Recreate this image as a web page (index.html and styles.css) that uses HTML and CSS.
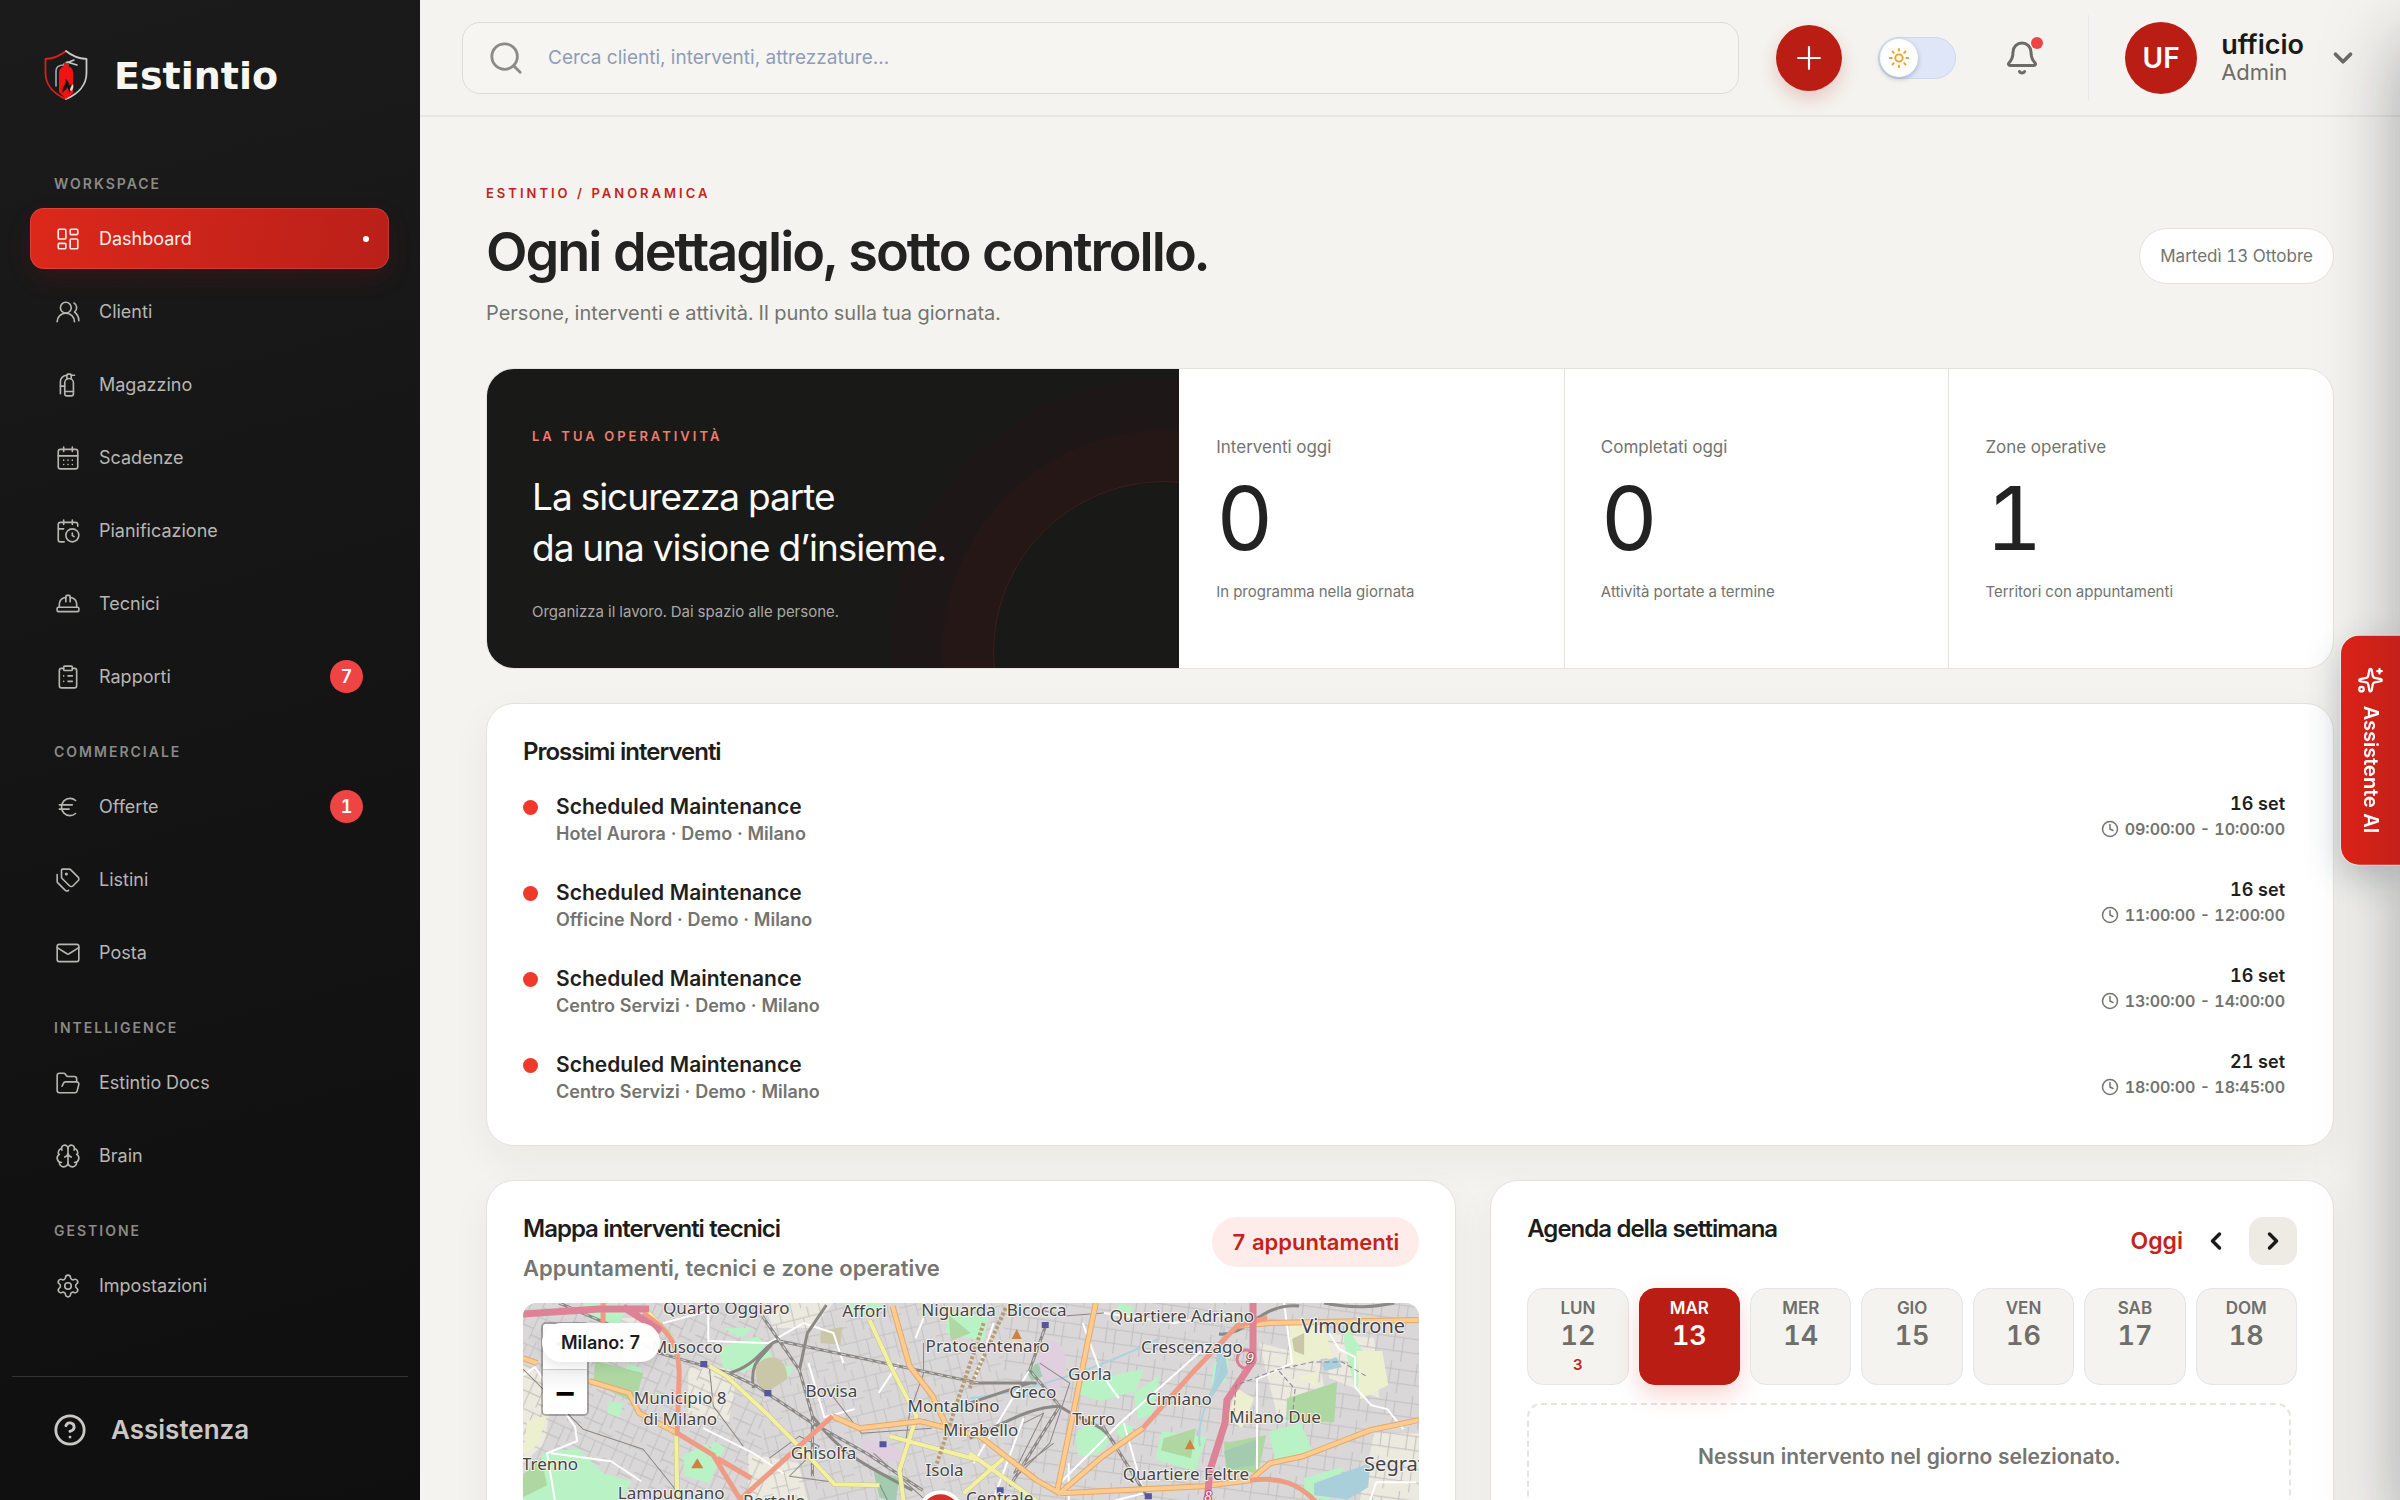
FILE: index.html
```html
<!DOCTYPE html>
<html lang="it">
<head>
<meta charset="utf-8">
<meta name="viewport" content="width=device-width, initial-scale=1">
<title>Estintio – Dashboard</title>
<link rel="stylesheet" href="styles.css">
</head>
<body>
<div class="app">
  <aside class="sidebar">
    <a class="brand" href="#">
      <svg class="brand-mark" viewBox="0 0 44 50" fill="none" aria-hidden="true">
        <path d="M22 1C16 6 9 8.500 1.500 9v14C1.500 35 10 44 22 49" stroke="#d81f1f" stroke-width="1.800"/>
        <path d="M22 1c6 5 13 7.500 20.500 8v14C42.500 35 34 44 22 49" stroke="#c9c9c9" stroke-width="1.800"/>
        <path d="M12 36V21c0-4 3-6 8-6h4" stroke="#a8a8a8" stroke-width="1.600"/>
        <path d="M20 14l10-4M23 12l10 3" stroke="#c9c9c9" stroke-width="1.500"/>
        <path d="M15 42V23c0-4 3-6 5-7v-3h4v3c3 1 5 3 5 7v20l-7 6z" fill="#f31212"/>
        <path d="M19 43c-2-4 1-6 2-9 1-2 1-3 0-5 4 2 4 4 4 7 1-1 1-2 1-3 2 4 1 7-1 10 0-3-1-4-2-6 0 3-3 3-4 6z" fill="#1c1010"/>
        <path d="M26 40c0-3 2-4 3-6 1 3 0 6-2 7z" fill="#ddd"/>
      </svg>
      <span class="brand-name">Estintio</span>
    </a>
    <nav class="nav" aria-label="Menu principale">
      <h2 class="nav-label">WORKSPACE</h2>
      <ul class="nav-list">
        <li><a class="nav-item active" href="#" aria-current="page"><svg class="icon" viewBox="0 0 24 24"><rect x="3" y="3" width="7" height="9" rx="1"/><rect x="14" y="3" width="7" height="5" rx="1"/><rect x="14" y="12" width="7" height="9" rx="1"/><rect x="3" y="16" width="7" height="5" rx="1"/></svg><span>Dashboard</span><i class="active-dot"></i></a></li>
        <li><a class="nav-item" href="#"><svg class="icon" viewBox="0 0 24 24"><path d="M18 21a8 8 0 0 0-16 0"/><circle cx="10" cy="8" r="5"/><path d="M22 20c0-3.370-2-6.500-4-8a5 5 0 0 0-.45-8.300"/></svg><span>Clienti</span></a></li>
        <li><a class="nav-item" href="#"><svg class="icon" viewBox="0 0 24 24"><path d="M15 6.500V3a1 1 0 0 0-1-1h-2a1 1 0 0 0-1 1v3.500"/><path d="M9 18h8"/><path d="M18 3h-3"/><path d="M11 3a6 6 0 0 0-6 6v11"/><path d="M5 13h4"/><path d="M17 10a4 4 0 0 0-8 0v10a2 2 0 0 0 2 2h4a2 2 0 0 0 2-2Z"/></svg><span>Magazzino</span></a></li>
        <li><a class="nav-item" href="#"><svg class="icon" viewBox="0 0 24 24"><path d="M8 2v4M16 2v4M3 10h18"/><rect width="18" height="18" x="3" y="4" rx="2"/><path d="M8 14h.01M12 14h.01M16 14h.01M8 18h.01M12 18h.01M16 18h.01"/></svg><span>Scadenze</span></a></li>
        <li><a class="nav-item" href="#"><svg class="icon" viewBox="0 0 24 24"><path d="M16 14v2.200l1.600 1M16 2v4"/><path d="M21 7.500V6a2 2 0 0 0-2-2H5a2 2 0 0 0-2 2v14a2 2 0 0 0 2 2h3.500M3 10h5M8 2v4"/><circle cx="16" cy="16" r="6"/></svg><span>Pianificazione</span></a></li>
        <li><a class="nav-item" href="#"><svg class="icon" viewBox="0 0 24 24"><path d="M10 10V5a1 1 0 0 1 1-1h2a1 1 0 0 1 1 1v5"/><path d="M14 6a6 6 0 0 1 6 6v3"/><path d="M4 15v-3a6 6 0 0 1 6-6"/><rect x="2" y="15" width="20" height="4" rx="1"/></svg><span>Tecnici</span></a></li>
        <li><a class="nav-item" href="#"><svg class="icon" viewBox="0 0 24 24"><rect width="8" height="4" x="8" y="2" rx="1"/><path d="M16 4h2a2 2 0 0 1 2 2v14a2 2 0 0 1-2 2H6a2 2 0 0 1-2-2V6a2 2 0 0 1 2-2h2M12 11h4M12 16h4M8 11h.01M8 16h.01"/></svg><span>Rapporti</span><b class="count">7</b></a></li>
      </ul>
      <h2 class="nav-label">COMMERCIALE</h2>
      <ul class="nav-list">
        <li><a class="nav-item" href="#"><svg class="icon" viewBox="0 0 24 24"><path d="M4 10h12M4 14h9"/><path d="M19 6a7.700 7.700 0 0 0-5.200-2A7.900 7.900 0 0 0 6 12c0 4.400 3.500 8 7.800 8 2 0 3.800-.8 5.200-2"/></svg><span>Offerte</span><b class="count">1</b></a></li>
        <li><a class="nav-item" href="#"><svg class="icon" viewBox="0 0 24 24"><path d="M13.172 2a2 2 0 0 1 1.414.586l6.710 6.710a2.400 2.400 0 0 1 0 3.408l-4.592 4.592a2.400 2.400 0 0 1-3.408 0l-6.710-6.710A2 2 0 0 1 6 9.172V3a1 1 0 0 1 1-1z"/><path d="M2 7v6.172a2 2 0 0 0 .586 1.414l6.710 6.710a2.400 2.400 0 0 0 3.191.193"/><circle cx="10.500" cy="6.500" r=".7"/></svg><span>Listini</span></a></li>
        <li><a class="nav-item" href="#"><svg class="icon" viewBox="0 0 24 24"><path d="m22 7-8.991 5.727a2 2 0 0 1-2.009 0L2 7"/><rect x="2" y="4" width="20" height="16" rx="2"/></svg><span>Posta</span></a></li>
      </ul>
      <h2 class="nav-label">INTELLIGENCE</h2>
      <ul class="nav-list">
        <li><a class="nav-item" href="#"><svg class="icon" viewBox="0 0 24 24"><path d="M2 7.500V5c0-1.100.9-2 2-2h3.900a2 2 0 0 1 1.690.9l.81 1.200a2 2 0 0 0 1.670.9H18a2 2 0 0 1 2 2v2M6.500 15l1.400-2.900A2 2 0 0 1 9.700 11H20a2 2 0 0 1 1.940 2.500l-1.550 6a2 2 0 0 1-1.940 1.500H4a2 2 0 0 1-2-2V7"/></svg><span>Estintio Docs</span></a></li>
        <li><a class="nav-item" href="#"><svg class="icon" viewBox="0 0 24 24"><path d="M12 18V5M15 13a4.170 4.170 0 0 1-3-4 4.170 4.170 0 0 1-3 4"/><path d="M17.598 6.500A3 3 0 1 0 12 5a3 3 0 1 0-5.598 1.500"/><path d="M17.997 5.125a4 4 0 0 1 2.526 5.770M18 18a4 4 0 0 0 2-7.464"/><path d="M19.967 17.483A4 4 0 1 1 12 18a4 4 0 1 1-7.967-.517"/><path d="M6 18a4 4 0 0 1-2-7.464M6.003 5.125a4 4 0 0 0-2.526 5.770"/></svg><span>Brain</span></a></li>
      </ul>
      <h2 class="nav-label">GESTIONE</h2>
      <ul class="nav-list">
        <li><a class="nav-item" href="#"><svg class="icon" viewBox="0 0 24 24"><path d="M9.671 4.136a2.340 2.340 0 0 1 4.659 0 2.340 2.340 0 0 0 3.319 1.915 2.340 2.340 0 0 1 2.330 4.033 2.340 2.340 0 0 0 0 3.831 2.340 2.340 0 0 1-2.330 4.033 2.340 2.340 0 0 0-3.319 1.915 2.340 2.340 0 0 1-4.659 0 2.340 2.340 0 0 0-3.320-1.915 2.340 2.340 0 0 1-2.330-4.033 2.340 2.340 0 0 0 0-3.831A2.340 2.340 0 0 1 6.350 6.051a2.340 2.340 0 0 0 3.319-1.915"/><circle cx="12" cy="12" r="3"/></svg><span>Impostazioni</span></a></li>
      </ul>
    </nav>
    <a class="help" href="#"><svg class="help-icon" viewBox="0 0 24 24"><circle cx="12" cy="12" r="10"/><path d="M9.090 9a3 3 0 0 1 5.830 1c0 2-3 3-3 3M12 17h.01"/></svg>Assistenza</a>
  </aside>

  <div class="page">
    <header class="topbar">
      <label class="search">
        <svg class="search-icon" viewBox="0 0 24 24"><circle cx="11" cy="11" r="9"/><path d="m22 22-4.600-4.600"/></svg>
        <input type="search" placeholder="Cerca clienti, interventi, attrezzature..." aria-label="Cerca">
      </label>
      <button class="add" type="button" aria-label="Nuovo"><svg viewBox="0 0 24 24"><path d="M12 2v20M2 12h20"/></svg></button>
      <button class="theme" type="button" role="switch" aria-checked="false" aria-label="Tema scuro">
        <span class="knob"><svg viewBox="0 0 24 24"><circle cx="12" cy="12" r="4"/><path d="M12 2v2M12 20v2M4.900 4.900l1.400 1.400M17.700 17.700l1.400 1.400M2 12h2M20 12h2M6.300 17.700l-1.400 1.400M19.100 4.900l-1.400 1.400"/></svg></span>
      </button>
      <button class="bell" type="button" aria-label="Notifiche"><svg viewBox="0 0 24 24"><path d="M10.268 21a2 2 0 0 0 3.464 0"/><path d="M3.262 15.326A1 1 0 0 0 4 17h16a1 1 0 0 0 .740-1.673C19.410 13.956 18 12.499 18 8A6 6 0 0 0 6 8c0 4.499-1.411 5.956-2.738 7.326"/></svg><i class="bell-dot"></i></button>
      <button class="profile" type="button">
        <span class="avatar">UF</span>
        <span class="who"><strong>ufficio</strong><span>Admin</span></span>
        <svg class="chevron" viewBox="0 0 24 24"><path d="m6 9 6 6 6-6"/></svg>
      </button>
    </header>

    <main class="content">
      <div class="heading">
        <div>
          <p class="eyebrow">ESTINTIO / PANORAMICA</p>
          <h1>Ogni dettaglio, sotto controllo.</h1>
          <p class="lead">Persone, interventi e attività. Il punto sulla tua giornata.</p>
        </div>
        <time class="date-pill">Martedì 13 Ottobre</time>
      </div>

      <section class="hero">
        <div class="hero-main">
          <p class="hero-eyebrow">LA TUA OPERATIVITÀ</p>
          <h2>La sicurezza parte<br>da una visione d’insieme.</h2>
          <p class="hero-note">Organizza il lavoro. Dai spazio alle persone.</p>
        </div>
        <div class="stat"><span class="stat-label">Interventi oggi</span><strong>0</strong><span class="stat-note">In programma nella giornata</span></div>
        <div class="stat"><span class="stat-label">Completati oggi</span><strong>0</strong><span class="stat-note">Attività portate a termine</span></div>
        <div class="stat"><span class="stat-label">Zone operative</span><strong>1</strong><span class="stat-note">Territori con appuntamenti</span></div>
      </section>

      <section class="card upcoming">
        <h2 class="card-title">Prossimi interventi</h2>
        <ul class="visits">
          <li class="visit"><i class="visit-dot"></i><div class="visit-text"><h3>Scheduled Maintenance</h3><p>Hotel Aurora · Demo · Milano</p></div><div class="visit-when"><strong>16 set</strong><span><svg viewBox="0 0 24 24"><circle cx="12" cy="12" r="10"/><path d="M12 6v6l4 2"/></svg>09:00:00 - 10:00:00</span></div></li>
          <li class="visit"><i class="visit-dot"></i><div class="visit-text"><h3>Scheduled Maintenance</h3><p>Officine Nord · Demo · Milano</p></div><div class="visit-when"><strong>16 set</strong><span><svg viewBox="0 0 24 24"><circle cx="12" cy="12" r="10"/><path d="M12 6v6l4 2"/></svg>11:00:00 - 12:00:00</span></div></li>
          <li class="visit"><i class="visit-dot"></i><div class="visit-text"><h3>Scheduled Maintenance</h3><p>Centro Servizi · Demo · Milano</p></div><div class="visit-when"><strong>16 set</strong><span><svg viewBox="0 0 24 24"><circle cx="12" cy="12" r="10"/><path d="M12 6v6l4 2"/></svg>13:00:00 - 14:00:00</span></div></li>
          <li class="visit"><i class="visit-dot"></i><div class="visit-text"><h3>Scheduled Maintenance</h3><p>Centro Servizi · Demo · Milano</p></div><div class="visit-when"><strong>21 set</strong><span><svg viewBox="0 0 24 24"><circle cx="12" cy="12" r="10"/><path d="M12 6v6l4 2"/></svg>18:00:00 - 18:45:00</span></div></li>
        </ul>
      </section>

      <div class="columns">
        <section class="card">
          <div class="card-head">
            <div><h2 class="card-title">Mappa interventi tecnici</h2><p class="card-sub">Appuntamenti, tecnici e zone operative</p></div>
            <span class="total">7 appuntamenti</span>
          </div>
          <div class="map">
            <svg class="map-canvas" viewBox="0 0 895 400" preserveAspectRatio="xMidYMin slice" role="img" aria-label="Mappa di Milano">
              <defs>
                <pattern id="streets-a" width="34" height="30" patternUnits="userSpaceOnUse" patternTransform="rotate(24)"><path d="M0 6h34M0 19h20M8 0v30M20 6v24M28 0v19M20 26h14" fill="none" stroke="#c3c0c0" stroke-width="1"/></pattern>
                <pattern id="streets-b" width="28" height="36" patternUnits="userSpaceOnUse" patternTransform="rotate(-14)"><path d="M0 10h28M0 24h16M6 0v36M16 10v26M22 0v10M16 30h12" fill="none" stroke="#c5c2c2" stroke-width="1"/></pattern>
                <pattern id="streets-c" width="26" height="32" patternUnits="userSpaceOnUse" patternTransform="rotate(8)"><path d="M0 8h26M0 22h26M9 0v22M18 8v24" fill="none" stroke="#c1bebe" stroke-width="1"/></pattern>
              </defs>
              <rect width="895" height="400" fill="#d9d7d7"/>
              <path fill="#ece9df" d="M0 60l30 20-8 60-22 20zM90 15h40l10 30h-40zM165 65h50l-10 55-40-10zM240 0h70l-20 25h-40zM735 40l60 15 10 60-50 5zM800 30l50 5 5 60-50-20zM850 130h45v70h-60zM225 150l50 10 10 40h-60z"/>
              <path fill="url(#streets-a)" d="M0 0h240v400H0z"/><path fill="url(#streets-b)" d="M240 0h240v400H240z"/><path fill="url(#streets-c)" d="M480 0h415v400H480z"/>
              <g fill="#b9f2c4"><path d="M195 45l40-12 15 22-30 14-20-4zM0 195l20-45 35-5 25 25 28 8-15 30H0zM160 152l24-12 10 22-8 18-25-8zM60 0l45 3-10 20-30-8zM425 8l40 5-5 25-38-8zM200 25h30l-12 10zM320 0h40l-10 12-25-3zM560 78l60-12-8 22-35 10-25-8zM610 90l26-18-8 40-14 4zM552 135c0-12 20-18 32-5 5 14-12 26-30 22zM638 128l45 6-12 34-40-12zM745 128l32-8 12 30-38 8zM780 175l40-12-15 34-25-4zM820 20l20 30-8 40-12-50zM690 60l15-8-3 25-15 10zM105 60l14 6-8 24-14-10zM190 138l12 6-6 12-10-6zM86 98l14 2-4 14-12-4zM260 62l10 2-4 10-8-4zM595 0l16 4-6 8-12-3zM596 118l14 6-10 12-8-6z"/></g>
              <g fill="#aed7a2"><path d="M72 58l48 12-8 30-42-20zM763 95l50-16-3 40-48-2zM0 172l18-18 6 28-24 12zM640 135l32-10-5 30-30-8zM700 140l42-8-8 38-32-4zM425 12l22 18-20 8z"/></g>
              <g fill="#a3cbb0"><path d="M350 168l26 6-4 26-16-6zM502 68l12-8 8 12-14 6zM700 148l34-12-4 26-26 4z"/></g>
              <g fill="#e0cfdf"><path d="M516 42c14-10 26-2 26 20 0 20-10 30-16 26-8-14-14-28-10-46zM338 135l34 8 12 16-40-2zM530 108l12 4-10 10z"/></g>
              <g fill="#edf0cf"><path d="M765 22h35l8 32-40 8zM832 48h26l6 34-28 14zM712 85l18 10-12 30-14-10zM775 75l20-8-4 16zM4 118l20-6-10 30-14 10z"/></g>
              <path fill="#c9c7a8" d="M234 60c20-14 30 0 30 16l-22 14c-8-6-12-20-8-30zM297 28l22-4-2 18-20-2zM768 36l12-6v22l-10-4z"/>
              <g fill="#a9cfdb"><path d="M790 180l22-8 34-12-2 24-20 12-34-4zM798 60l14-6 6 10-18 4zM698 30l6 40-16 24 4-30z"/></g>
              <path d="M446 95c60-6 130-30 190-60M700 25c0 60-30 80-24 118" fill="none" stroke="#a9d4dd" stroke-width="2"/>
              <g fill="none" stroke="#fff" stroke-width="2">
                <path d="M140 20l45-12 0 30 60 2 35-20 30 10 10 30M180 125l50 25 30 20M0 72l12-8 40 60 2 14-30 12 8 48M28 150l60 8 30 20M285 60l16 54 30-8M375 60l-20 30M400 15l-8 20M536 180l60-60 90-80M545 160l0 40M600 120l20 70-40 10M595 95l-18-25-18-50M580 10l70 10 60-10M760 0l8 60-35 16 0 90M805 30l10 16 16 8 0 30 16 18 16 4 16 20M846 197l6-18h40M510 60l-60 100M470 20l-20 60M500 115l-30 80"/>
              </g>
              <g fill="none" stroke="#8a8684" stroke-width="1"><path d="M0 66l60 60 60 20 40 50M186 63l4 40 30 40M246 155l30-22 20 10-30 30 60 8 30 0 10 20M303 85l35 45 70-5M400 40v30l-14 40-8 60M580 10l-40 3-30-8M500 120l20-10-30 60 40-30M516 60l30 20-20 60-40 40M350 150l50 45"/></g>
              <g fill="none" stroke="#8b8886" stroke-width="3">
                <path d="M36 0l47 20 53 30 70 20 27 13 56 37 54 30 56 37M239 13l37 54 13 46v60M303 2l-19 28-8 37M206 70c30-8 36-32 50-32l200 42M230 85c-4-30 10-30 20-46M289 113c30 40 55 50 100 74M523 20l-17 47 30 36-50 80M579 123l44 70M446 80h67M446 100l60-20M536 103c-30 0-60 20-90 32M536 103c30 20 40 14 55 38M775 3c-40-3-50 30-80 28M800 0c30 6 50 4 70 0"/>
              </g>
              <g fill="none" stroke="#d6d3d1" stroke-width="1" stroke-dasharray="5 4"><path d="M36 0l47 20 53 30 70 20 27 13 56 37 54 30 56 37M239 13l37 54 13 46v60M523 20l-17 47 30 36-50 80M579 123l44 70M256 38l200 42"/></g>
              <g fill="none" stroke="#c7c486" stroke-width="5"><path d="M119 3l30 32M186 63l17 10 40 37 46 47 22 24 45 1M153 133l1 60M346 17l23 50 24 46-17 54 4 30M366 133l90 24M446 150l70 50M440 190l40-35"/></g>
              <g fill="none" stroke="#f3f0a4" stroke-width="4"><path d="M119 3l30 32M186 63l17 10 40 37 46 47 22 24 45 1M153 133l1 60M346 17l23 50 24 46-17 54 4 30M366 133l90 24M446 150l70 50M440 190l40-35"/></g>
              <g fill="none" stroke="#e7a868" stroke-width="6"><path d="M66 78l40 12 10 20 38 20M369 3l17 60 23 30 14 30M309 113l27 12 60-7 60 15 57 44 23 13M572 0l-39 190M536 190l43-37 40-28M713 23l33-3 148-3M894 117l-48 10-67 26-33 7-20 17-47 6-143 7M0 55l14 5"/></g>
              <g fill="none" stroke="#fbcb90" stroke-width="4"><path d="M66 78l40 12 10 20 38 20M369 3l17 60 23 30 14 30M309 113l27 12 60-7 60 15 57 44 23 13M572 0l-39 190M536 190l43-37 40-28M713 23l33-3 148-3M894 117l-48 10-67 26-33 7-20 17-47 6-143 7M0 55l14 5"/></g>
              <path d="M482 5l-36 80M460 20l-50 150" fill="none" stroke="#b99b75" stroke-width="4" stroke-dasharray="3 2"/>
              <path d="M80 0v20M120 10c24 16 36 30 36 60l-2 60 36 22 28 46M216 197l93-84M619 125l50-56 44-46 30-8M726 177c30-4 50 4 66 22M194 155l34 20" fill="none" stroke="#ef9c86" stroke-width="5"/>
              <path d="M0 11l76-5h50M100 4l38 24M729 0v58l-26 39-2 23-15 47-3 33" fill="none" stroke="#de8397" stroke-width="7"/>
              <circle cx="722" cy="56" r="9" fill="none" stroke="#dc7d92" stroke-width="3"/>
              <path d="M710 110l2-28 40-15 36-8 30 0 24 14M755 68l16 18-2 20" fill="none" stroke="#8f7f97" stroke-width="1" stroke-dasharray="5 3"/>
              <g fill="#d08040"><path d="M168 165l6-10 6 10zM488 36l5-10 5 10zM661 146l5-10 5 10z"/></g>
              <g fill="#5656a0"><path d="M177 58h7v6h-7zM241 87h7v6h-7zM356 138h7v6h-7zM518 19h7v6h-7zM473 184h7v6h-7zM621 190h7v6h-7z"/></g>
              <g class="places">
                <text x="203" y="11">Quarto Oggiaro</text><text x="341" y="14">Affori</text><text x="435" y="13">Niguarda</text><text x="513" y="13">Bicocca</text><text x="658" y="19">Quartiere Adriano</text>
                <text x="164" y="50">Musocco</text><text x="464" y="49">Pratocentenaro</text><text x="668" y="50">Crescenzago</text><text x="566" y="77">Gorla</text><text x="308" y="94">Bovisa</text><text x="509" y="95">Greco</text>
                <text x="157" y="101">Municipio 8</text><text x="157" y="122">di Milano</text><text x="430" y="109">Montalbino</text><text x="655" y="102">Cimiano</text><text x="751" y="120">Milano Due</text><text x="570" y="122">Turro</text><text x="457" y="133">Mirabello</text>
                <text x="300" y="156">Ghisolfa</text><text x="27" y="167">Trenno</text><text x="421" y="173">Isola</text><text x="662" y="177">Quartiere Feltre</text><text x="148" y="196">Lampugnano</text><text x="251" y="204">Portello</text><text x="476" y="201">Centrale</text>
                <text class="town" x="829" y="30">Vimodrone</text><text class="town" x="876" y="168">Segrate</text>
                <text class="route" x="726" y="60">9</text><text class="route" x="684" y="198">8</text>
              </g>
              <circle cx="417" cy="210" r="21" fill="#d3302b" stroke="#fff" stroke-width="4"/>
            </svg>
            <div class="zoom"><button type="button" aria-label="Ingrandisci">+</button><button type="button" aria-label="Riduci">−</button></div>
            <span class="zone">Milano: 7</span>
          </div>
        </section>

        <section class="card">
          <div class="card-head agenda-head">
            <h2 class="card-title">Agenda della settimana</h2>
            <div class="pager">
              <button class="today" type="button">Oggi</button>
              <button class="step" type="button" aria-label="Precedente"><svg viewBox="0 0 24 24"><path d="m15 18-6-6 6-6"/></svg></button>
              <button class="step raised" type="button" aria-label="Successiva"><svg viewBox="0 0 24 24"><path d="m9 18 6-6-6-6"/></svg></button>
            </div>
          </div>
          <div class="week">
            <button class="day" type="button"><span>LUN</span><b>12</b><small>3</small></button>
            <button class="day selected" type="button" aria-pressed="true"><span>MAR</span><b>13</b></button>
            <button class="day" type="button"><span>MER</span><b>14</b></button>
            <button class="day" type="button"><span>GIO</span><b>15</b></button>
            <button class="day" type="button"><span>VEN</span><b>16</b></button>
            <button class="day" type="button"><span>SAB</span><b>17</b></button>
            <button class="day" type="button"><span>DOM</span><b>18</b></button>
          </div>
          <p class="empty">Nessun intervento nel giorno selezionato.</p>
        </section>
      </div>
    </main>
  </div>
</div>
<div class="drawer" aria-hidden="true"></div>
<button class="assistant" type="button">
  <svg viewBox="0 0 24 24"><path d="M11.017 2.814a1 1 0 0 1 1.966 0l1.051 5.558a2 2 0 0 0 1.594 1.594l5.558 1.051a1 1 0 0 1 0 1.966l-5.558 1.051a2 2 0 0 0-1.594 1.594l-1.051 5.558a1 1 0 0 1-1.966 0l-1.051-5.558a2 2 0 0 0-1.594-1.594l-5.558-1.051a1 1 0 0 1 0-1.966l5.558-1.051a2 2 0 0 0 1.594-1.594z"/><path d="M20 2v4M22 4h-4"/><circle cx="4" cy="20" r="2"/></svg>
  <span>Assistente AI</span>
</button>
</body>
</html>
```
FILE: styles.css
```css
:root {
  --red: #b91d14;
  --red-text: #c4231a;
  --ink: #1f1f1e;
  --muted: #73736f;
  --line: #e4e2dd;
  --canvas: #f4f3ef;
}

* { box-sizing: border-box; }

body {
  margin: 0;
  overflow: hidden;
  background: var(--canvas);
  color: var(--ink);
  font-family: Inter, "Liberation Sans", sans-serif;
  font-variant-numeric: tabular-nums;
}

h1, h2, h3, p, ul { margin: 0; padding: 0; }
ul { list-style: none; }
a { color: inherit; text-decoration: none; }
button { padding: 0; border: 0; background: none; color: inherit; font: inherit; font-variant-numeric: inherit; cursor: pointer; }
svg { display: block; flex: none; fill: none; stroke: currentColor; stroke-width: 2; stroke-linecap: round; stroke-linejoin: round; }

.app { display: grid; grid-template-columns: 420px minmax(0, 1fr); height: 100vh; }

/* Sidebar */
.sidebar {
  display: flex;
  flex-direction: column;
  background: linear-gradient(165deg, #1b1b1b 0%, #141414 50%, #0f0f0f 100%);
  color: #b7b6b3;
}
.brand { display: flex; align-items: flex-start; gap: 26px; height: 176px; padding: 50px 44px 0; }
.brand-mark { width: 44px; height: 50px; stroke: none; }
.brand-name { color: #f8f6f1; font: 700 38px/52px "DejaVu Sans", sans-serif; }
.nav { padding: 0 31px 0 30px; }
.nav-label {
  padding: 0 24px 16px;
  color: #8b8a87;
  font-size: 14px;
  font-weight: 600;
  line-height: 16px;
  letter-spacing: 2px;
}
.nav-list + .nav-label { padding-top: 37px; }
.nav-list { display: flex; flex-direction: column; gap: 12px; }
.nav-item {
  display: flex;
  align-items: center;
  gap: 18px;
  height: 61px;
  padding: 0 26px 0 25px;
  border-radius: 14px;
  font-size: 18px;
}
.nav-item.active {
  padding-right: 20px;
  background: linear-gradient(100deg, #dc281b, #b92019);
  box-shadow: inset 0 0 0 1px rgba(255, 255, 255, .12), 0 10px 24px rgba(185, 29, 20, .14);
  color: #fbeeec;
}
.icon { width: 26px; height: 26px; stroke-width: 1.5; }
.active-dot { width: 6px; height: 6px; margin-left: auto; border-radius: 50%; background: #fff; }
.count {
  width: 33px;
  margin-left: auto;
  border-radius: 50%;
  background: #ef4444;
  color: #fff;
  font-size: 18px;
  font-weight: 600;
  line-height: 33px;
  text-align: center;
}
.help {
  display: flex;
  align-items: center;
  gap: 24px;
  margin: auto 12px 0;
  padding: 36px 41px 53px;
  border-top: 1px solid #333;
  color: #c9c8c6;
  font-size: 26px;
  font-weight: 600;
  line-height: 34px;
}
.help-icon { width: 34px; height: 34px; }

/* Top bar */
.page { display: flex; flex-direction: column; min-height: 0; }
.topbar {
  display: flex;
  flex: none;
  align-items: center;
  height: 117px;
  padding: 0 42px;
  border-bottom: 2px solid #e7e6e2;
}
.search {
  display: flex;
  flex: 1;
  align-items: center;
  gap: 25px;
  height: 72px;
  padding: 0 26px;
  border: 1px solid #dddcd8;
  border-radius: 18px;
  background: #f6f5f1;
}
.search-icon { width: 34px; height: 34px; color: #8b8b88; }
.search input { flex: 1; min-width: 0; padding: 0; border: 0; outline: 0; background: none; color: inherit; font: 400 19px/28px Inter, sans-serif; }
.search input::placeholder { color: #8e9db8; opacity: 1; }
.add {
  display: grid;
  place-items: center;
  width: 66px;
  height: 66px;
  margin-left: 37px;
  border-radius: 50%;
  background: var(--red);
  box-shadow: 0 8px 18px rgba(185, 29, 20, .2);
  color: #fff;
}
.add svg { width: 26px; height: 26px; }
.theme {
  width: 78px;
  height: 42px;
  margin-left: 36px;
  padding: 1px;
  border: 1px solid #ccd8ee;
  border-radius: 21px;
  background: #dfe6f7;
}
.knob { display: grid; place-items: center; width: 38px; height: 38px; border-radius: 50%; background: #fff; box-shadow: 0 2px 5px rgba(40, 60, 100, .3); color: #eda021; }
.knob svg { width: 22px; height: 22px; stroke-width: 2; }
.bell { position: relative; margin: 0 48px; color: #6c6b68; }
.bell svg { width: 36px; height: 36px; }
.bell-dot { position: absolute; top: -3px; right: -3px; width: 12px; height: 12px; border-radius: 50%; background: #ef4444; }
.profile { display: flex; align-items: center; height: 86px; padding-left: 36px; border-left: 1px solid #e7e8e8; text-align: left; }
.avatar { width: 72px; border-radius: 50%; background: var(--red); color: #fff; font-size: 28px; font-weight: 600; line-height: 72px; text-align: center; }
.who { display: flex; flex-direction: column; margin: 0 24px; color: #6c6b68; font-size: 22px; line-height: 26px; }
.who strong { color: #1a1a19; font-size: 27px; font-weight: 600; line-height: 28px; }
.chevron { width: 30px; height: 30px; color: #6c6b68; stroke-width: 3; }

/* Content */
.content { flex: 1; min-height: 0; padding: 67px 66px 66px; overflow-y: auto; scrollbar-width: none; }
.heading { display: flex; align-items: center; justify-content: space-between; margin-bottom: 41px; }
.eyebrow, .hero-eyebrow { font-size: 13px; font-weight: 600; line-height: 18px; letter-spacing: 3px; }
.eyebrow { color: var(--red-text); }
h1 { margin: 18px 0 15px; color: #222220; font-size: 54px; font-weight: 600; line-height: 64px; letter-spacing: -2px; }
.lead { color: var(--muted); font-size: 20px; line-height: 28px; }
.date-pill { padding: 14px 20px; border: 1px solid var(--line); border-radius: 28px; background: #fff; color: var(--muted); font-size: 17px; line-height: 26px; }

.hero {
  display: grid;
  grid-template-columns: 9fr 5fr 5fr 5fr;
  overflow: hidden;
  border: 1px solid var(--line);
  border-radius: 28px;
  background: #fff;
}
.hero-main { position: relative; overflow: hidden; padding: 58px 45px 45px; background: #191918; }
.hero-main::after {
  content: "";
  position: absolute;
  right: -156px;
  bottom: -155px;
  width: 340px;
  height: 340px;
  border: 1px solid #3d1f1d;
  border-radius: 50%;
  box-shadow: 0 0 0 51px #241716, 0 0 0 102px #1d1817;
}
.hero-main > * { position: relative; z-index: 1; }
.hero-eyebrow { color: #ee7d6c; }
.hero h2 { margin: 26px 0 28px; color: #fbfaf7; font-size: 37px; font-weight: 400; line-height: 51px; letter-spacing: -1px; }
.hero-note { color: #a9a8a5; font-size: 15px; line-height: 22px; }
.stat { display: flex; flex-direction: column; justify-content: center; padding: 0 37px; }
.stat + .stat { padding-left: 36px; border-left: 1px solid var(--line); }
.stat-label { color: var(--muted); font-size: 17px; line-height: 24px; }
.stat strong { margin: 15px 0 19px; color: #222; font-size: 88px; font-weight: 400; line-height: 88px; }
.stat-note { color: var(--muted); font-size: 15px; line-height: 22px; }

.card {
  padding: 32px 36px 40px;
  border: 1px solid var(--line);
  border-radius: 28px;
  background: #fff;
  box-shadow: 0 14px 40px rgba(40, 36, 28, .05);
}
.card-title { color: #1d1d1c; font-size: 24px; font-weight: 600; line-height: 32px; letter-spacing: -1px; }
.upcoming { margin: 34px 0; }
.visits { display: flex; flex-direction: column; gap: 32px; margin-top: 25px; padding-right: 12px; }
.visit { display: flex; gap: 18px; }
.visit-dot { width: 15px; height: 15px; margin-top: 7px; border-radius: 50%; background: #ee3a2a; }
.visit-text { flex: 1; }
.visit h3 { font-size: 21px; font-weight: 600; line-height: 28px; }
.visit p { color: var(--muted); font-size: 18px; font-weight: 600; line-height: 26px; }
.visit-when { text-align: right; }
.visit-when strong { display: block; font-size: 18px; font-weight: 600; line-height: 22px; }
.visit-when span { display: flex; align-items: center; justify-content: flex-end; gap: 6px; color: var(--muted); font-size: 16px; font-weight: 600; line-height: 28px; }
.visit-when svg { width: 18px; height: 18px; }

.columns { display: grid; grid-template-columns: 23fr 20fr; gap: 34px; }
.card-head { display: flex; align-items: flex-start; justify-content: space-between; margin-bottom: 20px; }
.card-sub { margin-top: 8px; color: #757572; font-size: 22px; font-weight: 600; line-height: 30px; }
.total { margin-top: 4px; padding: 10px 20px; border-radius: 25px; background: #fdecea; color: var(--red-text); font-size: 22px; font-weight: 600; line-height: 30px; }

.map { position: relative; overflow: hidden; height: 400px; border-radius: 14px; background: #d9d7d7; }
.map-canvas { width: 100%; height: 100%; stroke: none; stroke-linecap: butt; }
.places text { fill: #454443; stroke: #f4f3f1; stroke-width: 2px; paint-order: stroke; font: 400 17px "Noto Sans", sans-serif; text-anchor: middle; }
.places .town { font-size: 20px; }
.places .route { fill: #fff; stroke: #b5405c; font-size: 14px; font-style: italic; }
.zoom { position: absolute; top: 19px; left: 18px; display: grid; width: 48px; border: 2px solid rgba(0, 0, 0, .25); border-radius: 5px; overflow: hidden; }
.zoom button { height: 45px; background: #fff; color: #000; font: 700 34px/45px "Liberation Mono", monospace; }
.zoom button + button { padding-top: 4px; border-top: 1px solid #ccc; background: linear-gradient(#f0f0f0, #fff 50%); }
.zone { position: absolute; top: 20px; left: 19px; padding: 6px 19px; border-radius: 20px; background: rgba(255, 255, 255, .96); color: #1a1a1a; font-size: 18px; font-weight: 600; line-height: 27px; box-shadow: 0 4px 12px rgba(0, 0, 0, .1); }

.agenda-head { margin-bottom: 23px; }
.pager { display: flex; align-items: center; gap: 9px; margin-top: 4px; }
.today { color: var(--red-text); font-size: 23px; font-weight: 600; }
.step { display: grid; place-items: center; width: 48px; height: 48px; border-radius: 14px; color: #1a1a19; }
.step.raised { background: #eeebe5; }
.step svg { width: 28px; height: 28px; stroke-width: 3; }
.week { display: grid; grid-template-columns: repeat(7, 1fr); gap: 10px; }
.day {
  display: flex;
  flex-direction: column;
  align-items: center;
  min-height: 97px;
  padding: 8px 0;
  border: 1px solid #e2e5e9;
  border-radius: 16px;
  background: var(--canvas);
  color: #6f6e6b;
}
.day span { font-size: 17px; font-weight: 600; line-height: 22px; }
.day b { font-size: 27px; font-weight: 600; line-height: 34px; }
.day small { margin-top: 1px; color: var(--red-text); font-size: 15px; font-weight: 600; line-height: 22px; }
.day.selected { border-color: var(--red); background: var(--red); box-shadow: 0 10px 24px rgba(220, 40, 30, .2); color: #fff; }
.empty {
  min-height: 240px;
  margin: 18px 6px 0 0;
  padding: 37px 20px;
  border: 2px dashed #e6e4df;
  border-radius: 14px;
  color: #757572;
  font-size: 21px;
  font-weight: 600;
  line-height: 30px;
  text-align: center;
}

/* Assistant: closed drawer and its tab */
.drawer { position: fixed; top: 0; bottom: 0; left: 100%; width: 600px; box-shadow: 0 40px 72px rgba(20, 24, 30, .36); }
.assistant {
  position: fixed;
  top: 50%;
  right: 0;
  display: flex;
  flex-direction: column;
  align-items: center;
  gap: 12px;
  width: 59px;
  padding: 31px 0;
  transform: translateY(-50%);
  border-radius: 18px 0 0 18px;
  background: linear-gradient(90deg, #dc2218, #c42019);
  box-shadow: 0 0 0 1px rgba(255, 255, 255, .4), 0 12px 36px rgba(30, 50, 70, .28);
  color: #fff;
}
.assistant svg { width: 27px; height: 27px; }
.assistant span { font-size: 20px; font-weight: 600; line-height: 24px; writing-mode: vertical-rl; }
```
